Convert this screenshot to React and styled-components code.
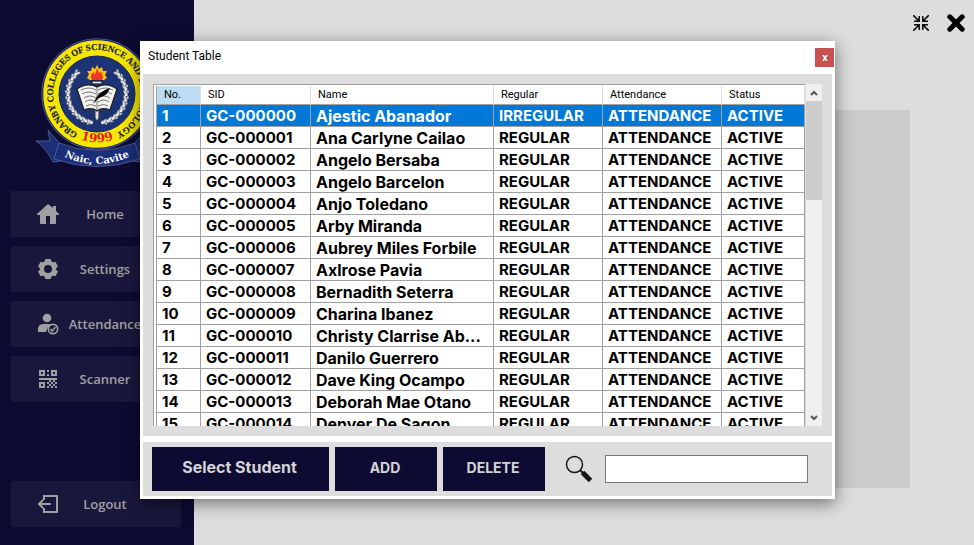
import React from "react";
import styled, { createGlobalStyle } from "styled-components";

const GlobalStyle = createGlobalStyle`
  *, *::before, *::after { box-sizing: border-box; }
  body { margin: 0; font-family: "Open Sans", "Noto Sans", sans-serif; }
  button, input { font: inherit; margin: 0; }
`;

const navy = "#0e0b33";
const surface = "#dddddd";
const line = "#a0a0a0";

const Page = styled.div`
  position: relative;
  display: flex;
  min-height: 100vh;
  background: ${surface};
`;

const Sidebar = styled.aside`
  display: flex;
  flex-direction: column;
  width: 194px;
  padding: 38px 13px 18px 11px;
  background: ${navy};
`;

const LogoBox = styled.div`
  height: 153px;
  padding-left: 23px;
  svg { display: block; }
`;

const Nav = styled.nav`
  display: flex;
  flex: 1;
  flex-direction: column;
  gap: 9px;
`;

const NavButton = styled.button`
  display: grid;
  grid-template-columns: 22px 1fr;
  align-items: center;
  height: 46px;
  margin-top: ${(p) => (p.$last ? "auto" : "0")};
  padding: 0 30px 0 26px;
  border: 0;
  background: #1a173d;
  color: #a0a0a0;
  font-size: 13px;
  font-weight: 600;
  white-space: nowrap;
  svg { display: block; }
`;

const NavLabel = styled.span`
  justify-self: center;
`;

const Main = styled.main`
  display: flex;
  flex: 1;
  flex-direction: column;
  padding: 0 64px 57px;
`;

const WindowControls = styled.div`
  display: flex;
  justify-content: flex-end;
  gap: 15px;
  height: 110px;
  margin-right: -56px;
  padding-top: 13px;
`;

const IconButton = styled.button`
  display: grid;
  place-items: center;
  width: 20px;
  height: 20px;
  padding: 0;
  border: 0;
  background: none;
`;

const ContentPanel = styled.section`
  flex: 1;
  background: #cbcbcb;
`;

const Overlay = styled.div`
  position: absolute;
  inset: 0;
  display: flex;
  padding: 41px 139px 46px 140px;
`;

const Dialog = styled.div`
  display: flex;
  flex: 1;
  flex-direction: column;
  min-width: 0;
  padding: 0 3px 3px;
  background: #fff;
  box-shadow: 0 4px 16px rgba(0, 0, 0, 0.5);
`;

const TitleBar = styled.header`
  display: flex;
  align-items: flex-start;
  justify-content: space-between;
  height: 33px;
  padding: 7px 0 0 5px;
`;

const Title = styled.h1`
  margin: 0;
  font-family: Roboto, sans-serif;
  font-size: 12px;
  font-weight: 400;
  line-height: 16px;
  color: #000;
`;

const CloseButton = styled.button`
  display: grid;
  place-items: center;
  width: 19px;
  height: 19px;
  margin-right: -2px;
  padding: 0;
  border: 0;
  background: #c75050;
`;

const TablePanel = styled.section`
  display: flex;
  flex: 1;
  min-height: 0;
  gap: 1px;
  padding: 10px;
  background: ${surface};
`;

const TableView = styled.div`
  flex: 1;
  min-width: 0;
  overflow: hidden;
  padding: 1px 0 0 2px;
  border-top: 1px solid ${line};
  border-left: 1px solid ${line};
  background: #fff;
`;

const Table = styled.table`
  width: 100%;
  table-layout: fixed;
  border-spacing: 0;
  border-left: 1px solid ${line};
`;

const Col = styled.col`
  width: ${(p) => p.$width};
`;

const HeadCell = styled.th`
  height: 19px;
  padding: 0 7px;
  border-right: 1px solid #dedede;
  border-bottom: 1px solid ${line};
  background: ${(p) => (p.$active ? "#bcdcf4" : "#fff")};
  color: #000;
  font-family: Roboto, sans-serif;
  font-size: 11px;
  font-weight: 400;
  line-height: 16px;
  text-align: left;
`;

const Row = styled.tr`
  background: ${(p) => (p.$selected ? "#0078d7" : "#fff")};
  color: ${(p) => (p.$selected ? "#fff" : "#000")};
`;

const Cell = styled.td`
  height: 22px;
  padding: 0 0 0 5px;
  overflow: hidden;
  border-right: 1px solid ${line};
  border-bottom: 1px solid ${line};
  font-family: Inter, sans-serif;
  font-size: ${(p) => (p.$name ? "16px" : "15px")};
  font-weight: 700;
  line-height: 20px;
  white-space: nowrap;
`;

const ScrollBar = styled.div`
  display: flex;
  flex-direction: column;
  width: 16px;
  background: #f0f0f0;
`;

const ScrollArrow = styled.button`
  display: grid;
  place-items: center;
  height: 17px;
  margin-top: ${(p) => (p.$end ? "auto" : "0")};
  padding: 0;
  border: 0;
  background: none;
`;

const ScrollThumb = styled.div`
  height: 29%;
  background: #cdcdcd;
`;

const ActionBar = styled.footer`
  display: flex;
  align-items: center;
  gap: 6px;
  height: 54px;
  margin-top: 6px;
  padding: 0 24px 0 9px;
  background: ${surface};
`;

const ActionButton = styled.button`
  width: ${(p) => (p.$wide ? "177px" : "102px")};
  height: 44px;
  padding: 0 2px 4px 0;
  border: 0;
  background: ${navy};
  color: #d4d4d4;
  font-family: Inter, sans-serif;
  font-size: ${(p) => (p.$wide ? "16px" : "14px")};
  font-weight: 700;
`;

const Search = styled.label`
  display: flex;
  flex: 1;
  align-items: center;
  gap: 12px;
  padding-left: 14px;
  svg { flex: none; }
`;

const SearchInput = styled.input`
  flex: 1;
  min-width: 0;
  height: 28px;
  padding: 0 6px;
  border: 1px solid #7a7a7a;
  border-radius: 0;
  background: #fff;
  font-size: 13px;
`;

const laurelAngles = [100, 111, 122, 133, 144, 155, 166, 177, 188, 199, 210, 221];

function Laurel() {
  return laurelAngles.map((angle) => (
    <g key={angle} transform={`rotate(${angle}) translate(29 0)`} fill="#dcdee2" stroke="#222a45" strokeWidth=".5">
      <ellipse cx="2.2" cy="1" rx="3.6" ry="1.6" transform="rotate(55)" />
      <ellipse cx="2.2" cy="-1" rx="3.6" ry="1.6" transform="rotate(125)" />
      <circle r="1" fill="#fff" stroke="none" />
    </g>
  ));
}

function CollegeLogo() {
  return (
    <svg width="126" height="132" viewBox="-63 -56 126 132" role="img" aria-label="Granby Colleges of Science and Technology">
      <defs>
        <path id="ring" d="M-22 38 A44 44 0 1 1 22 38" />
        <path id="year" d="M-30 38 A49 49 0 0 0 30 38" />
        <path id="ribbon" d="M-38 60 Q0 80 38 60" />
      </defs>
      <g fill="#1a2f78" stroke="#62709d" strokeWidth=".7">
        <path d="M-61 47 L-47 47 L-49 36 L-30 58 L-36 67 L-44 68 Q-51 54 -61 47Z" />
        <path d="M61 47 L47 47 L49 36 L30 58 L36 67 L44 68 Q51 54 61 47Z" />
        <path d="M-38 49 Q0 64 38 49 L43 65 Q0 80 -43 65Z" />
      </g>
      <circle r="54.5" fill="#f6e600" stroke="#182b70" strokeWidth="1.5" />
      <circle r="55.4" fill="none" stroke="#7b82a2" strokeWidth=".5" />
      <circle r="38" fill="#1c3476" stroke="#122759" />
      <g fontWeight="700">
        <text fontFamily="Liberation Serif, serif" fontSize="9" fill="#172243" stroke="#172243" strokeWidth=".2" textAnchor="middle">
          <textPath href="#ring" startOffset="50%">GRANBY COLLEGES OF SCIENCE AND TECHNOLOGY</textPath>
        </text>
        <text fontFamily="DejaVu Serif, serif" fontSize="12" fill="#e51b20" textAnchor="middle">
          <textPath href="#year" startOffset="50%">1999</textPath>
        </text>
        <text fontFamily="DejaVu Serif, serif" fontSize="10" fill="#fff" textAnchor="middle">
          <textPath href="#ribbon" startOffset="50%">Naic, Cavite</textPath>
        </text>
      </g>
      <Laurel />
      <g transform="scale(-1 1)"><Laurel /></g>
      <path d="M0-29 2-25 5-27 6-23 10-23 8-19 10-16 7-14-7-14-10-16-8-20-10-23-6-23-5-27-2-25Z" fill="#ffc20d" />
      <path d="M-5-14 Q-8-19-3-22 L-2-19 0-26 2-21 4-22 Q7-17 5-14Z" fill="#ef3824" />
      <path d="M-5-13H5V-10H-5Z" fill="#d5d8db" stroke="#111" />
      <path d="M-2 14H2V24L0 27-2 24Z" fill="#ddd" stroke="#333" />
      <path d="M-20-5 Q-10-12 0-7 Q10-12 20-5 L13 16 Q5 13 0 17 Q-5 13-13 16Z" fill="#f2f2ef" stroke="#222" strokeWidth="1.3" />
      <path d="M-16-4Q-8-8-1-4M-15 0Q-8-4-1 0M-13 4Q-7 0-1 4M-12 8Q-7 4-1 8M-11 12Q-7 9-1 12M16-4Q8-8 1-4M15 0Q8-4 1 0M13 4Q7 0 1 4M12 8Q7 4 1 8M11 12Q7 9 1 12M0-7V16" fill="none" stroke="#555" strokeWidth=".8" />
      <path d="M-4 10Q1-3 13-6Q11 1 4 3Q1 4-4 10Z" fill="#080808" />
    </svg>
  );
}

function HomeIcon() {
  return (
    <svg width="22" height="20" viewBox="0 0 22 20" fill="currentColor" aria-hidden="true">
      <path d="M11 0 16 4V2H19V7L22 10V11H19V19Q19 20 18 20H13V12H9V20H4Q3 20 3 19V11H0V10Z" />
    </svg>
  );
}

function GearIcon() {
  return (
    <svg width="22" height="22" viewBox="-11 -11 22 22" fill="currentColor" aria-hidden="true">
      <circle r="6" fill="none" stroke="currentColor" strokeWidth="4" />
      {[0, 60, 120, 180, 240, 300].map((a) => (
        <path key={a} d="M-4-6-3-9Q-3-10-2-10H2Q3-10 3-9L4-6Z" transform={`rotate(${a})`} />
      ))}
    </svg>
  );
}

function AttendanceIcon() {
  return (
    <svg width="22" height="22" viewBox="0 0 22 22" fill="currentColor" aria-hidden="true">
      <circle cx="10" cy="5" r="4.3" />
      <path d="M1 19V16Q1 11 7 11H12Q14 11 15 12Q10 13 9 19Z" />
      <circle cx="16" cy="16" r="4.7" fill="none" stroke="currentColor" strokeWidth="1.7" />
      <path d="M13.5 16 15.3 18 18.5 14" fill="none" stroke="currentColor" strokeWidth="1.5" />
    </svg>
  );
}

function QrIcon() {
  const dots = [
    [8, 0], [8, 4], [0, 8], [2, 8], [4, 8], [8, 8], [6, 8], [10, 8], [14, 8],
    [8, 12], [10, 10], [12, 8], [12, 12], [14, 10], [16, 8], [16, 12], [14, 14],
    [10, 14], [8, 16], [12, 16], [16, 16],
  ];
  return (
    <svg width="22" height="18" viewBox="-2 0 22 18" fill="none" stroke="currentColor" strokeWidth="2" aria-hidden="true">
      <path d="M1 1H5V5H1ZM13 1H17V5H13ZM1 13H5V17H1Z" />
      {dots.map(([x, y]) => (
        <rect key={`${x}-${y}`} x={x} y={y} width="2" height="2" fill="currentColor" stroke="none" />
      ))}
    </svg>
  );
}

function LogoutIcon() {
  return (
    <svg width="22" height="20" viewBox="0 0 22 20" fill="none" stroke="currentColor" strokeWidth="2" aria-hidden="true">
      <path d="M7 6V2H20V18H7V14M14 10H3M6 6 2 10 6 14" />
    </svg>
  );
}

function ShrinkIcon() {
  return (
    <svg width="16" height="16" viewBox="0 0 16 16" aria-hidden="true">
      {[0, 90, 180, 270].map((a) => (
        <g key={a} transform={`rotate(${a} 8 8)`}>
          <path d="M0 0 6 6" stroke="#111" strokeWidth="1.6" />
          <path d="M7 1V7H1V5.5H3.5L5.5 3.5V1Z" fill="#111" />
        </g>
      ))}
    </svg>
  );
}

function CrossIcon() {
  return (
    <svg width="18" height="18" viewBox="0 0 18 18" aria-hidden="true">
      <path d="M2.8 2.8 15.2 15.2M15.2 2.8 2.8 15.2" stroke="#000" strokeWidth="5" strokeLinecap="round" />
    </svg>
  );
}

function SearchIcon() {
  return (
    <svg width="28" height="28" viewBox="0 0 28 28" fill="none" stroke="#151515" aria-hidden="true">
      <circle cx="9.5" cy="9.5" r="8" strokeWidth="1.5" />
      <path d="M15 15 18 18" strokeWidth="2" />
      <path d="M17.5 17.5 25.5 25.5" strokeWidth="5" />
    </svg>
  );
}

function Chevron({ down }) {
  return (
    <svg width="8" height="6" viewBox="0 0 8 6" fill="none" stroke="#555" strokeWidth="2" aria-hidden="true">
      <path d={down ? "M1 1 4 4 7 1" : "M1 5 4 2 7 5"} />
    </svg>
  );
}

const navItems = [
  ["Home", HomeIcon],
  ["Settings", GearIcon],
  ["Attendance", AttendanceIcon],
  ["Scanner", QrIcon],
];

const columns = [
  ["No.", "44px"],
  ["SID", "110px"],
  ["Name", "auto"],
  ["Regular", "109px"],
  ["Attendance", "119px"],
  ["Status", "83px"],
];

const students = [
  "Ajestic Abanador", "Ana Carlyne Cailao", "Angelo Bersaba", "Angelo Barcelon",
  "Anjo Toledano", "Arby Miranda", "Aubrey Miles Forbile", "Axlrose Pavia",
  "Bernadith Seterra", "Charina Ibanez", "Christy Clarrise Ab...", "Danilo Guerrero",
  "Dave King Ocampo", "Deborah Mae Otano", "Denver De Sagon",
].map((name, i) => ({
  no: i + 1,
  sid: `GC-${String(i).padStart(6, "0")}`,
  name,
  regular: i === 0 ? "IRREGULAR" : "REGULAR",
}));

function StudentTable() {
  return (
    <Table>
      <colgroup>
        {columns.map(([label, width]) => <Col key={label} $width={width} />)}
      </colgroup>
      <thead>
        <tr>
          {columns.map(([label], i) => (
            <HeadCell key={label} scope="col" $active={i === 0}>{label}</HeadCell>
          ))}
        </tr>
      </thead>
      <tbody>
        {students.map((s, i) => (
          <Row key={s.sid} $selected={i === 0}>
            <Cell>{s.no}</Cell>
            <Cell>{s.sid}</Cell>
            <Cell $name>{s.name}</Cell>
            <Cell>{s.regular}</Cell>
            <Cell>ATTENDANCE</Cell>
            <Cell>ACTIVE</Cell>
          </Row>
        ))}
      </tbody>
    </Table>
  );
}

export default function App() {
  return (
    <Page>
      <GlobalStyle />
      <Sidebar>
        <LogoBox><CollegeLogo /></LogoBox>
        <Nav>
          {navItems.map(([label, Icon]) => (
            <NavButton key={label} type="button"><Icon /><NavLabel>{label}</NavLabel></NavButton>
          ))}
          <NavButton type="button" $last><LogoutIcon /><NavLabel>Logout</NavLabel></NavButton>
        </Nav>
      </Sidebar>
      <Main>
        <WindowControls>
          <IconButton type="button" aria-label="Shrink window"><ShrinkIcon /></IconButton>
          <IconButton type="button" aria-label="Close window"><CrossIcon /></IconButton>
        </WindowControls>
        <ContentPanel />
      </Main>
      <Overlay>
        <Dialog role="dialog" aria-labelledby="dialog-title">
          <TitleBar>
            <Title id="dialog-title">Student Table</Title>
            <CloseButton type="button" aria-label="Close">
              <svg width="6" height="6" viewBox="0 0 6 6" aria-hidden="true">
                <path d="M1 0 5 6M5 0 1 6" stroke="#fff" strokeWidth="1.6" />
              </svg>
            </CloseButton>
          </TitleBar>
          <TablePanel>
            <TableView><StudentTable /></TableView>
            <ScrollBar>
              <ScrollArrow type="button" aria-label="Scroll up"><Chevron /></ScrollArrow>
              <ScrollThumb />
              <ScrollArrow type="button" aria-label="Scroll down" $end><Chevron down /></ScrollArrow>
            </ScrollBar>
          </TablePanel>
          <ActionBar>
            <ActionButton type="button" $wide>Select Student</ActionButton>
            <ActionButton type="button">ADD</ActionButton>
            <ActionButton type="button">DELETE</ActionButton>
            <Search>
              <SearchIcon />
              <SearchInput type="text" aria-label="Search students" />
            </Search>
          </ActionBar>
        </Dialog>
      </Overlay>
    </Page>
  );
}
